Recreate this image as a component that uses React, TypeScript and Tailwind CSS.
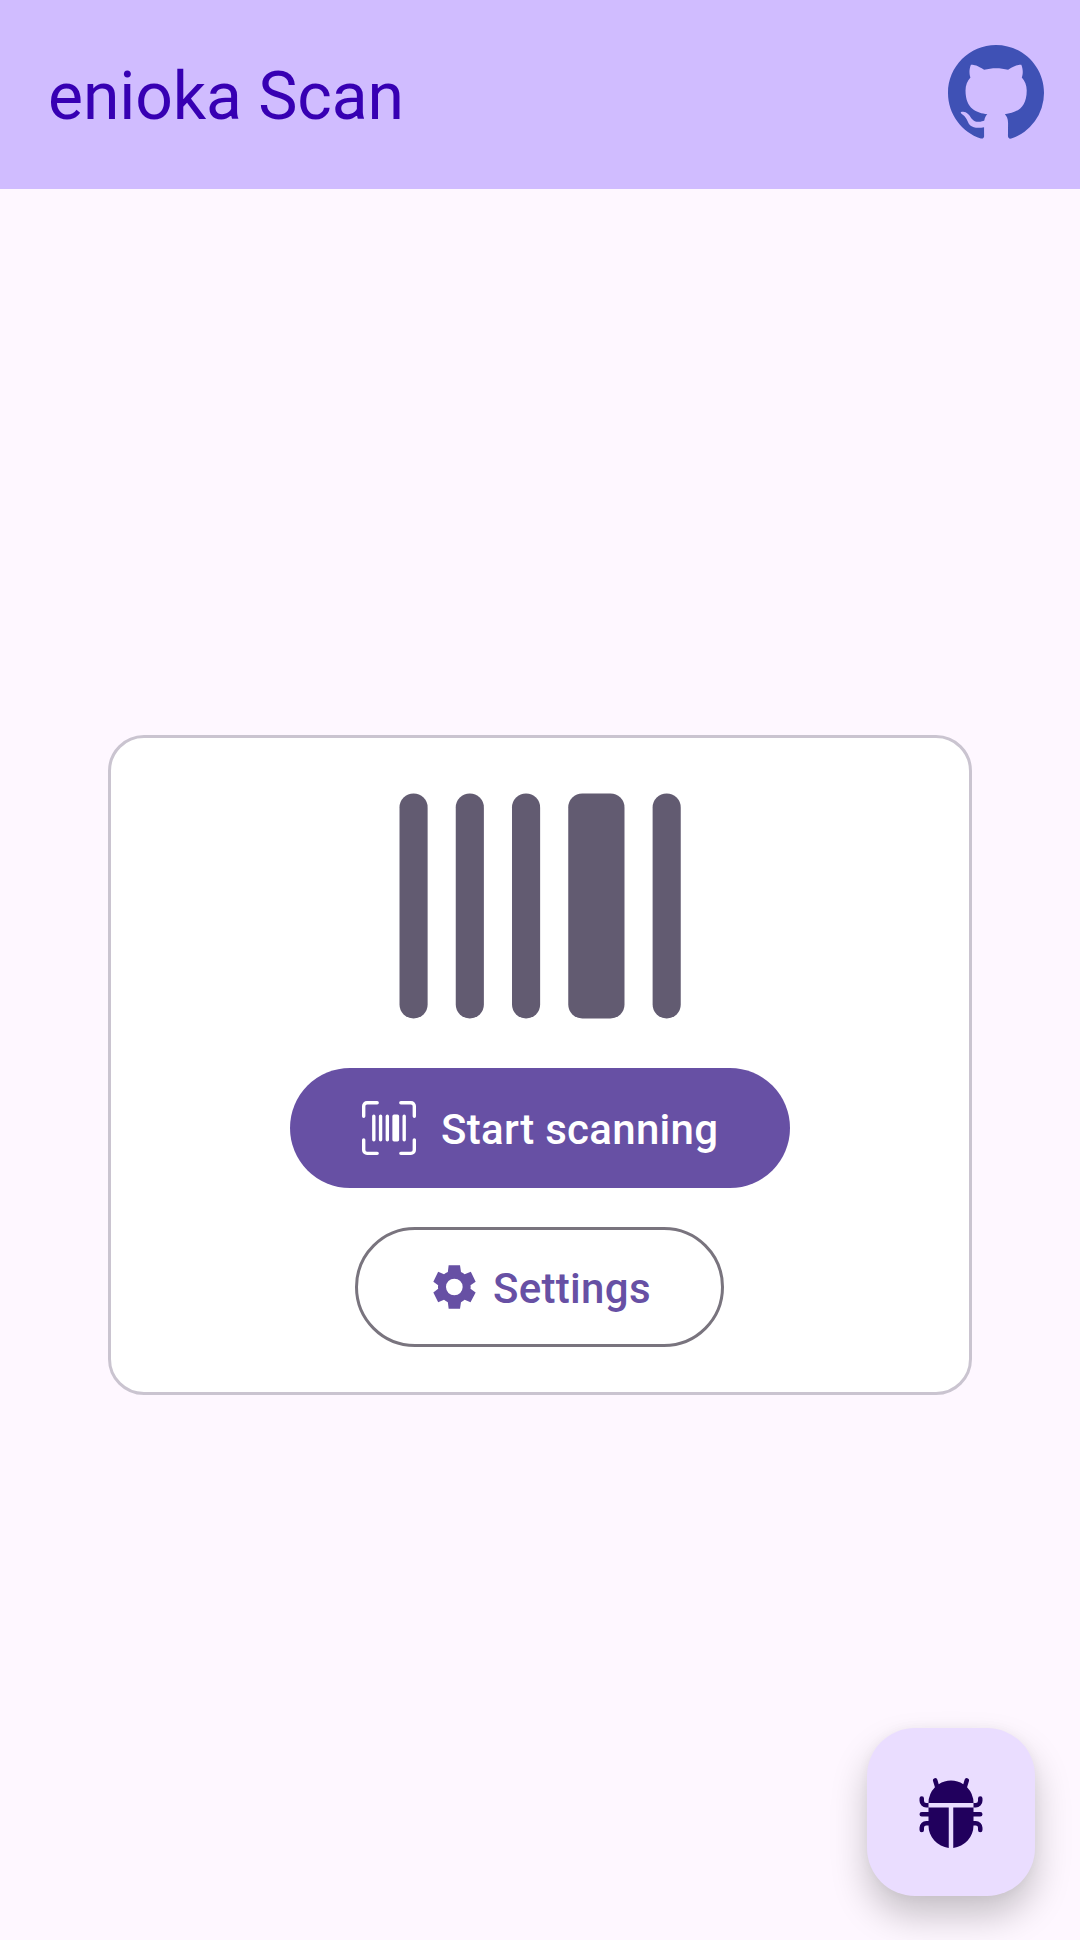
import { BsBugFill, BsUpcScan, BsGithub } from "react-icons/bs";

function Barcode() {
  return (
    <svg viewBox="2.982 3.982 10.027 8.036" className="-mb-px h-[226px] w-[282px] fill-[#625b71]" aria-hidden="true">
      <rect x="3" y="4" width="1" height="8" rx=".5" />
      <rect x="5" y="4" width="1" height="8" rx=".5" />
      <rect x="7" y="4" width="1" height="8" rx=".5" />
      <rect x="9" y="4" width="2" height="8" rx=".5" />
      <rect x="12" y="4" width="1" height="8" rx=".5" />
    </svg>
  );
}

function Gear() {
  return (
    <svg viewBox="0 0 132 132" className="size-[44px] fill-[#6750a4]" aria-hidden="true">
      <path
        fillRule="evenodd"
        d="M47 1H81L84 21Q90 23.5 95 28L113.500 20.500L128 50L112.500 61Q113.500 66 112.500 71L128 82.500L112.500 112L95 104.500Q90 109 84 111.500L81 131H47L44.500 111.500Q38 109 33 104.500L15.500 112L1 82.500L15.500 71Q14.500 66 15.500 61L1 50L15.500 20.500L33 28Q38 23.500 44.500 21ZM64 41A25 25 0 1 0 64 91A25 25 0 1 0 64 41Z"
      />
    </svg>
  );
}

export default function App() {
  return (
    <div className="relative flex h-[1940px] w-[1080px] flex-col overflow-hidden bg-[#fef7ff] font-['Roboto',sans-serif]">
      <header className="flex h-[189px] shrink-0 items-center justify-between bg-[#d0bcff] pl-12 pr-9">
        <h1 className="pt-1 text-[66px] leading-[78px] tracking-[-0.1px] text-[#3700b3]">enioka Scan</h1>
        <BsGithub className="mb-1 size-24 text-[#3f51b5]" />
      </header>

      <main className="flex flex-1 flex-col items-center pt-[546px]">
        <section className="flex h-[660px] w-[864px] flex-col items-center rounded-[36px] border-3 border-[#cac4d0] bg-white pt-[55px]">
          <Barcode />
          <button className="mt-[50px] flex h-[120px] w-[500px] items-center rounded-full bg-[#6750a4] pl-[72px] text-white">
            <BsUpcScan className="size-[54px]" />
            <span className="ml-[25px] pt-1 text-[42px] font-medium leading-none tracking-[0.3px]">Start scanning</span>
          </button>
          <button className="mr-px mt-[39px] flex h-[120px] w-[369px] items-center rounded-full border-3 border-[#79747e] pl-[75px] text-[#6750a4]">
            <Gear />
            <span className="ml-4 pt-1 text-[42px] font-medium leading-none tracking-[0.3px]">Settings</span>
          </button>
        </section>
      </main>

      <button className="absolute bottom-[44px] right-[45px] flex size-[168px] items-center justify-center rounded-[48px] bg-[#eaddff] text-[#21005d] shadow-[0_20px_36px_rgba(0,0,0,0.22),0_0_12px_rgba(0,0,0,0.04)]">
        <BsBugFill className="size-[72px]" />
      </button>
    </div>
  );
}
